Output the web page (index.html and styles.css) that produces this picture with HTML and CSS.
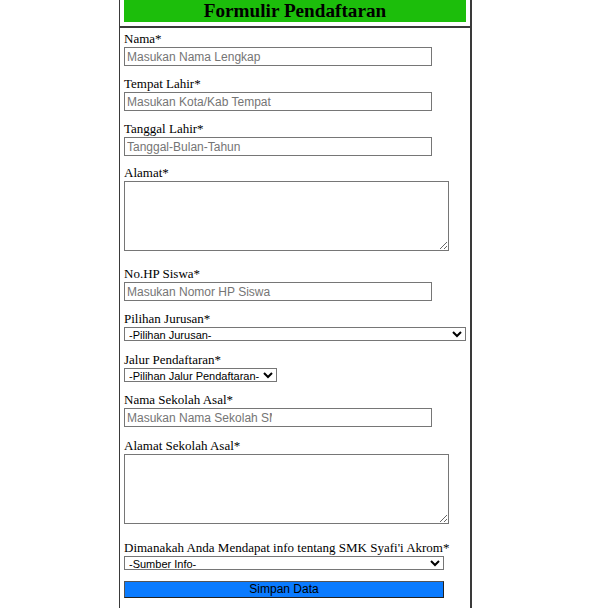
FILE: index.html
```html
<!DOCTYPE html>
<html lang="id">
<head>
<meta charset="utf-8">
<title>Formulir Pendaftaran</title>
<link rel="stylesheet" href="styles.css">
</head>
<body>
<div class="panel">
  <div class="header">
    <h1 class="title">Formulir Pendaftaran</h1>
  </div>
  <form class="form">
    <div class="field">
      <label class="label">Nama*</label>
      <input class="text" type="text" placeholder="Masukan Nama Lengkap">
    </div>
    <div class="field">
      <label class="label">Tempat Lahir*</label>
      <input class="text" type="text" placeholder="Masukan Kota/Kab Tempat">
    </div>
    <div class="field field-before-area">
      <label class="label">Tanggal Lahir*</label>
      <input class="text" type="text" placeholder="Tanggal-Bulan-Tahun">
    </div>
    <div class="field field-area">
      <label class="label">Alamat*</label>
      <textarea class="area"></textarea>
    </div>
    <div class="field">
      <label class="label">No.HP Siswa*</label>
      <input class="text" type="text" placeholder="Masukan Nomor HP Siswa">
    </div>
    <div class="field field-wide">
      <label class="label">Pilihan Jurusan*</label>
      <select class="select select-full"><option>-Pilihan Jurusan-</option></select>
    </div>
    <div class="field">
      <label class="label">Jalur Pendaftaran*</label>
      <select class="select select-jalur"><option>-Pilihan Jalur Pendaftaran-</option></select>
    </div>
    <div class="field field-wide">
      <label class="label">Nama Sekolah Asal*</label>
      <input class="text text-clip" type="text" placeholder="Masukan Nama Sekolah SMP/MTs">
    </div>
    <div class="field field-area2">
      <label class="label">Alamat Sekolah Asal*</label>
      <textarea class="area"></textarea>
    </div>
    <div class="field field-info">
      <label class="label">Dimanakah Anda Mendapat info tentang SMK Syafi'i Akrom*</label>
      <select class="select select-info"><option>-Sumber Info-</option></select>
    </div>
    <button class="submit" type="button">Simpan Data</button>
  </form>
</div>
</body>
</html>
```

FILE: styles.css
```css
html, body {
  margin: 0;
  padding: 0;
  background: #ffffff;
  overflow: hidden;
}

body {
  font-family: "Liberation Serif", "Times New Roman", serif;
  font-size: 13px;
  color: #000000;
}

.panel {
  margin-left: 119px;
  width: 353px;
  box-sizing: border-box;
  min-height: 640px;
  border-left: 1px solid #3a3a3a;
  border-right: 2px solid #3a3a3a;
}

.header {
  padding: 0 4px 4px 4px;
  border-bottom: 2px solid #3a3a3a;
}

.title {
  margin: 0;
  height: 22px;
  line-height: 22px;
  background: #1cbe0b;
  text-align: center;
  font-size: 19.2px;
  font-weight: bold;
}

.form {
  display: flex;
  flex-direction: column;
  align-items: flex-start;
  padding: 0 4px;
  margin: 0;
}

.field {
  display: flex;
  flex-direction: column;
  align-items: flex-start;
  margin-bottom: 7px;
}

.field-before-area {
  margin-bottom: 6px;
}

.field-area {
  margin-bottom: 12px;
}

.field-wide {
  margin-bottom: 8px;
}

.field-area2 {
  margin-bottom: 13px;
}

.field-info {
  margin-bottom: 11px;
}

.label {
  display: block;
  height: 19px;
  line-height: 22px;
  white-space: nowrap;
}

.text {
  box-sizing: border-box;
  width: 308px;
  height: 19px;
  margin: 0;
  padding: 1px 2px;
  border: 1px solid #767676;
  border-radius: 0;
  font-family: "Liberation Sans", Arial, sans-serif;
  font-size: 12px;
  color: #000;
  background: #fff;
  outline: none;
}

.text::placeholder {
  color: #757575;
  opacity: 1;
}

.text-clip {
  padding-right: 159px;
}

.area {
  box-sizing: border-box;
  display: block;
  width: 325px;
  height: 70px;
  margin: 0;
  padding: 2px;
  border: 1px solid #767676;
  border-radius: 0;
  font-family: "Liberation Mono", monospace;
  font-size: 13.333px;
  background: #fff;
}

.select {
  box-sizing: border-box;
  height: 14px;
  margin: 0;
  padding: 0;
  border: 1px solid #767676;
  border-radius: 0;
  font-family: "Liberation Sans", Arial, sans-serif;
  font-size: 11px;
  color: #000;
  background-color: #fff;
}

.select-full {
  width: 342px;
}

.select-info {
  width: 320px;
}

.submit {
  box-sizing: border-box;
  width: 320px;
  height: 17px;
  margin: 0;
  padding: 0;
  border: 1px solid #222;
  border-top-color: #555;
  border-left-color: #555;
  border-radius: 0;
  background: #0a7bff;
  font-family: "Liberation Sans", Arial, sans-serif;
  font-size: 12px;
  line-height: 15px;
  color: #000;
}
```
